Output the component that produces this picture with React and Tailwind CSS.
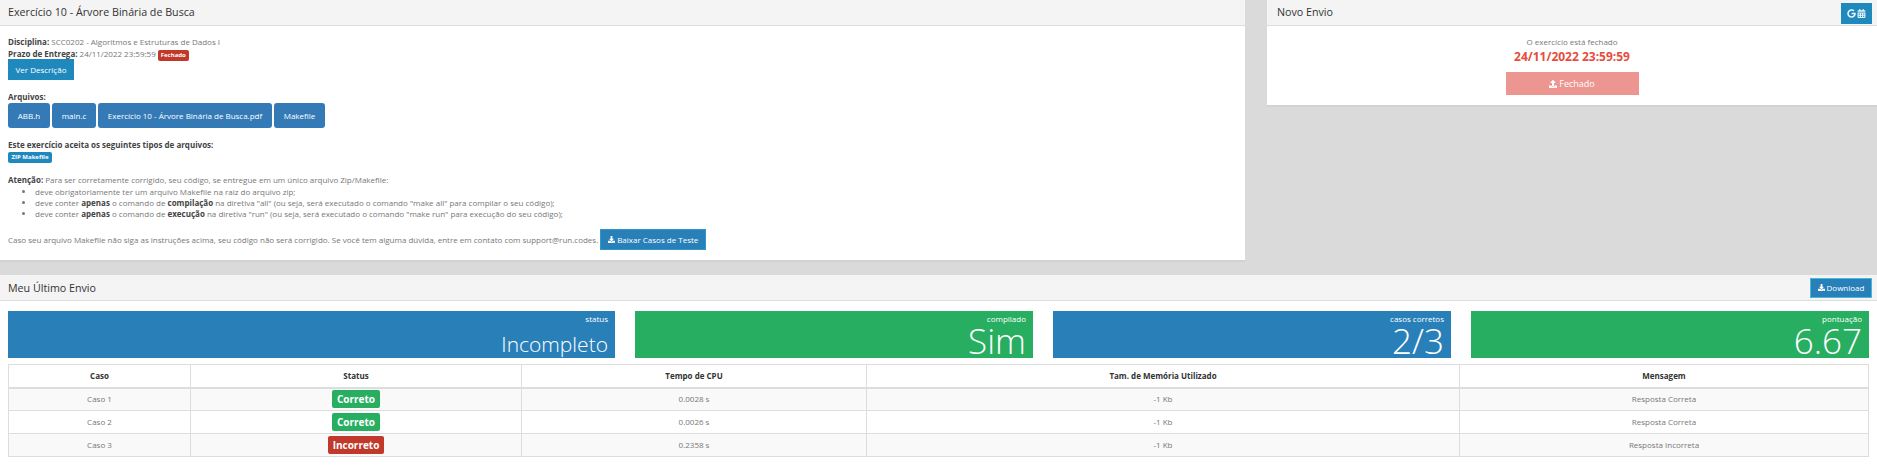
import React from 'react';
import { FaDownload, FaUpload, FaGoogle, FaCalendarAlt } from 'react-icons/fa';

const stats = [
  { label: 'status', value: 'Incompleto', color: 'bg-[#2980b9]', size: 'text-[21px] leading-[40px]' },
  { label: 'compilado', value: 'Sim', color: 'bg-[#27ae60]', size: 'text-[35px] leading-[34px]' },
  { label: 'casos corretos', value: '2/3', color: 'bg-[#2980b9]', size: 'text-[35px] leading-[34px]' },
  { label: 'pontuação', value: '6.67', color: 'bg-[#27ae60]', size: 'text-[35px] leading-[34px]' },
];

const rows = [
  { caso: 'Caso 1', status: 'Correto', ok: true, cpu: '0.0028 s', msg: 'Resposta Correta' },
  { caso: 'Caso 2', status: 'Correto', ok: true, cpu: '0.0026 s', msg: 'Resposta Correta' },
  { caso: 'Caso 3', status: 'Incorreto', ok: false, cpu: '0.2358 s', msg: 'Resposta Incorreta' },
];

const files = [
  { name: 'ABB.h', width: 'w-[42px]' },
  { name: 'main.c', width: 'w-[44px]' },
  { name: 'Exercício 10 - Árvore Binária de Busca.pdf', width: 'w-[174px]' },
  { name: 'Makefile', width: 'w-[51px]' },
];

const Header = ({ title, children, titleClass = '', inset = 'pl-2' }) => (
  <div className={`h-[26px] bg-[#f4f4f4] border-b border-[#dddddd] flex items-center justify-between ${inset} pr-[5px] text-[10.7px] text-[#333]`}>
    <span className={titleClass}>{title}</span>
    {children}
  </div>
);

const App = () => {
  return (
    <div className="w-[1877px] h-[476px] bg-[#dadada] overflow-hidden text-[8px] leading-[12px] text-[#777] font-['Open_Sans',sans-serif]">
      <div className="flex justify-between h-[262px]">
        <div className="w-[1245px] h-[262px] bg-white border-b-2 border-[#d2d2d2]">
          <Header title="Exercício 10 - Árvore Binária de Busca" titleClass="mb-[2px]" />
          <div className="px-2 pt-[10px]">
            <p><b className="text-[#444]">Disciplina:</b> SCC0202 - Algoritmos e Estruturas de Dados I</p>
            <p className="h-[11px] flex items-start gap-[2px]">
              <span><b className="text-[#444]">Prazo de Entrega:</b> 24/11/2022 23:59:59</span>
              <span className="mt-[2px] h-[11px] px-[3px] rounded-[2px] bg-[#c0392b] text-white text-[6px] font-bold leading-[11px]">Fechado</span>
            </p>
            <button className="block w-[66px] h-[21px] bg-[#1f89bd] text-white text-[8px]">Ver Descrição</button>
            <p className="mt-[11px]"><b className="text-[#444]">Arquivos:</b></p>
            <div className="flex gap-[2px]">
              {files.map((f) => (
                <button key={f.name} className={`${f.width} h-[25px] rounded-[3px] bg-[#337ab7] text-white text-[8px]`}>{f.name}</button>
              ))}
            </div>
            <p className="mt-[11px]"><b className="text-[#444]">Este exercício aceita os seguintes tipos de arquivos:</b></p>
            <span className="block mt-[1px] w-[44px] h-[11px] rounded-[2px] bg-[#1f89bd] text-white text-[6px] font-bold leading-[11px] text-center">ZIP Makefile</span>
            <p className="mt-[11px] leading-[11px]"><b className="text-[#444]">Atenção:</b> Para ser corretamente corrigido, seu código, se entregue em um único arquivo Zip/Makefile:</p>
            <ul className="list-disc pl-[27px] leading-[11px] mt-[1px]">
              <li>deve obrigatoriamente ter um arquivo Makefile na raiz do arquivo zip;</li>
              <li>deve conter <b className="text-[#444]">apenas</b> o comando de <b className="text-[#444]">compilação</b> na diretiva "all" (ou seja, será executado o comando "make all" para compilar o seu código);</li>
              <li>deve conter <b className="text-[#444]">apenas</b> o comando de <b className="text-[#444]">execução</b> na diretiva "run" (ou seja, será executado o comando "make run" para execução do seu código);</li>
            </ul>
            <div className="flex items-center gap-[2px] mt-[10px]">
              <span>Caso seu arquivo Makefile não siga as instruções acima, seu código não será corrigido. Se você tem alguma dúvida, entre em contato com support@run.codes.</span>
              <button className="flex items-center justify-center gap-[2px] w-[106px] h-[21px] bg-[#2980b9] border border-[#2c97c9] text-white text-[8px]"><FaDownload className="text-[7px]" /> Baixar Casos de Teste</button>
            </div>
          </div>
        </div>
        <div className="w-[610px] h-[107px] bg-white border-b-2 border-[#d2d2d2]">
          <Header title="Novo Envio" titleClass="mb-[2px]" inset="pl-[10px]">
            <button className="flex items-center justify-center gap-[1px] mt-[1px] w-[31px] h-[21px] bg-[#1f89bd] text-[#e8f4fa] text-[9px]"><FaGoogle /><FaCalendarAlt /></button>
          </Header>
          <div className="flex flex-col items-center pt-[10px]">
            <p>O exercício está fechado</p>
            <p className="text-[12px] leading-[18px] font-bold text-[#e74c3c]">24/11/2022 23:59:59</p>
            <button className="flex items-center justify-center gap-[2px] mt-[6px] w-[133px] h-[23px] bg-[#ed9590] text-white text-[9px]"><FaUpload className="text-[8px]" /> Fechado</button>
          </div>
        </div>
      </div>
      <div className="mt-[13px] h-[201px] bg-white">
        <Header title="Meu Último Envio">
          <button className="flex items-center justify-center gap-[2px] w-[62px] h-[20px] bg-[#2980b9] border border-[#46b8da] text-white text-[8px]"><FaDownload className="text-[7px]" /> Download</button>
        </Header>
        <div className="px-2 pt-[10px]">
          <div className="grid grid-cols-[607px_398px_398px_398px] gap-x-[20px]">
            {stats.map((s) => (
              <div key={s.label} className={`${s.color} h-[47px] text-right text-white px-[7px]`}>
                <div className="text-[8px] leading-[10px] pt-[3px]">{s.label}</div>
                <div className={`${s.size} font-light`}>{s.value}</div>
              </div>
            ))}
          </div>
          <table className="mt-[6px] w-[1861px] table-fixed border-collapse border border-[#dddddd] text-center">
            <colgroup>
              <col className="w-[182px]" />
              <col className="w-[331px]" />
              <col className="w-[345px]" />
              <col className="w-[593px]" />
              <col />
            </colgroup>
            <thead>
              <tr className="h-[23px] text-[#333]">
                {['Caso', 'Status', 'Tempo de CPU', 'Tam. de Memória Utilizado', 'Mensagem'].map((h) => (
                  <th key={h} className="border border-b-2 border-[#dddddd] font-bold">{h}</th>
                ))}
              </tr>
            </thead>
            <tbody>
              {rows.map((r, i) => (
                <tr key={r.caso} className={`h-[23px] ${i % 2 === 0 ? 'bg-[#f9f9f9]' : 'bg-white'}`}>
                  <td className="border border-[#dddddd]">{r.caso}</td>
                  <td className="border border-[#dddddd]">
                    <span className={`inline-block align-middle h-[18px] px-[5px] rounded-[2px] text-white text-[10px] font-bold leading-[18px] ${r.ok ? 'bg-[#27ae60]' : 'bg-[#c0392b]'}`}>{r.status}</span>
                  </td>
                  <td className="border border-[#dddddd]">{r.cpu}</td>
                  <td className="border border-[#dddddd]">-1 Kb</td>
                  <td className="border border-[#dddddd]">{r.msg}</td>
                </tr>
              ))}
            </tbody>
          </table>
        </div>
      </div>
    </div>
  );
};

export default App;
